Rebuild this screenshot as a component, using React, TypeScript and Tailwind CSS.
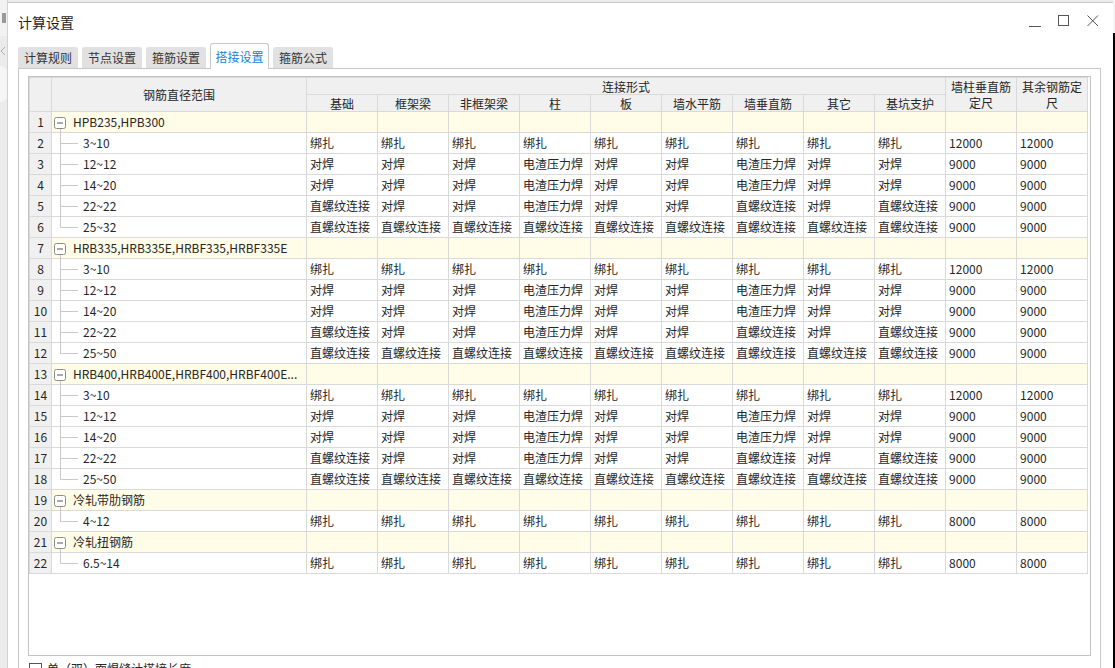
import React from "react";

const subHeaders = ["基础", "框架梁", "非框架梁", "柱", "板", "墙水平筋", "墙垂直筋", "其它", "基坑支护"];

const B = "绑扎";
const D = "对焊";
const E = "电渣压力焊";
const Z = "直螺纹连接";

const pattern = {
  small: [B, B, B, B, B, B, B, B, B, "12000", "12000"],
  mid: [D, D, D, E, D, D, E, D, D, "9000", "9000"],
  big: [Z, D, D, E, D, D, Z, D, Z, "9000", "9000"],
  all: [Z, Z, Z, Z, Z, Z, Z, Z, Z, "9000", "9000"],
  cold: [B, B, B, B, B, B, B, B, B, "8000", "8000"],
};

type Group = { name: string; children: { range: string; cells: string[] }[] };

const groups: Group[] = [
  {
    name: "HPB235,HPB300",
    children: [
      { range: "3~10", cells: pattern.small },
      { range: "12~12", cells: pattern.mid },
      { range: "14~20", cells: pattern.mid },
      { range: "22~22", cells: pattern.big },
      { range: "25~32", cells: pattern.all },
    ],
  },
  {
    name: "HRB335,HRB335E,HRBF335,HRBF335E",
    children: [
      { range: "3~10", cells: pattern.small },
      { range: "12~12", cells: pattern.mid },
      { range: "14~20", cells: pattern.mid },
      { range: "22~22", cells: pattern.big },
      { range: "25~50", cells: pattern.all },
    ],
  },
  {
    name: "HRB400,HRB400E,HRBF400,HRBF400E...",
    children: [
      { range: "3~10", cells: pattern.small },
      { range: "12~12", cells: pattern.mid },
      { range: "14~20", cells: pattern.mid },
      { range: "22~22", cells: pattern.big },
      { range: "25~50", cells: pattern.all },
    ],
  },
  { name: "冷轧带肋钢筋", children: [{ range: "4~12", cells: pattern.cold }] },
  { name: "冷轧扭钢筋", children: [{ range: "6.5~14", cells: pattern.cold }] },
];

const tabs = ["计算规则", "节点设置", "箍筋设置", "搭接设置", "箍筋公式"];

function GroupIcon() {
  return (
    <svg width="20" height="20" className="shrink-0 overflow-visible">
      <rect x="1.5" y="5.5" width="11" height="11" rx="2" fill="#fff" stroke="#8c8c8c" />
      <line x1="4" y1="11" x2="10" y2="11" stroke="#555" />
      <line x1="7.5" y1="17" x2="7.5" y2="21" stroke="#c9c9c9" />
    </svg>
  );
}

function BranchIcon({ last }: { last: boolean }) {
  return (
    <svg width="30" height="20" className="shrink-0 overflow-visible">
      <line x1="7.5" y1="-1" x2="7.5" y2={last ? 10.5 : 21} stroke="#c9c9c9" />
      <line x1="7.5" y1="10.5" x2="25" y2="10.5" stroke="#c9c9c9" />
    </svg>
  );
}

const td = "border border-[#d9d9d9] p-0 pl-[3px] whitespace-nowrap overflow-hidden";
const th = "border border-[#d9d9d9] p-0 font-normal text-center";

export default function App() {
  let n = 0;
  const rows: React.ReactNode[] = [];
  groups.forEach((g, gi) => {
    n += 1;
    rows.push(
      <tr key={"g" + gi} className="h-[21px] bg-[#fffce8]">
        <td className="border border-[#d9d9d9] p-0 bg-[#f0f0f0] text-center">{n}</td>
        <td className="border border-[#d9d9d9] p-0 pl-[1px]">
          <div className="flex items-center">
            <GroupIcon />
            <span className="whitespace-nowrap">{g.name}</span>
          </div>
        </td>
        {Array.from({ length: 11 }).map((_, i) => (
          <td key={i} className={td}></td>
        ))}
      </tr>
    );
    g.children.forEach((c, ci) => {
      n += 1;
      rows.push(
        <tr key={"c" + gi + "-" + ci} className="h-[21px] bg-white">
          <td className="border border-[#d9d9d9] p-0 bg-[#f0f0f0] text-center">{n}</td>
          <td className="border border-[#d9d9d9] p-0 pl-[1px]">
            <div className="flex items-center">
              <BranchIcon last={ci === g.children.length - 1} />
              <span>{c.range}</span>
            </div>
          </td>
          {c.cells.map((v, i) => (
            <td key={i} className={td}>
              {v}
            </td>
          ))}
        </tr>
      );
    });
  });

  return (
    <div className="w-[1115px] h-[668px] flex bg-[#ebebeb] overflow-hidden font-['Noto_Sans_CJK_SC',sans-serif] text-[12px] leading-[16px] text-[#262626]">
      {/* window behind */}
      <div className="w-[8px] shrink-0 flex flex-col overflow-hidden border-r border-[#d2d2d2]">
        <div className="h-[36px] bg-[#f2f2f2] flex items-center">
          <div className="w-[4px] h-[10px] bg-[#9a9a9a] ml-[2px]"></div>
        </div>
        <div className="h-[30px] flex items-center">
          <svg width="6" height="10">
            <path d="M5 1 L1 5 L5 9" fill="none" stroke="#b0b0b0" />
          </svg>
        </div>
        <div className="h-[36px] bg-[#f6f6f6] rounded-r-md"></div>
        <div className="flex-1"></div>
      </div>

      {/* dialog */}
      <div className="mt-[2px] flex-1 bg-white border-t border-[#c8c8c8] flex flex-col">
        <div className="h-[39px] shrink-0 flex items-center pl-[10px] pr-[12px]">
          <span className="text-[14px] leading-[20px] text-[#1f1f1f] -mt-[1px]">计算设置</span>
          <div className="ml-auto flex items-center gap-[17px] text-[#555] mr-[2px] -mt-[4px]">
            <svg width="12" height="12">
              <line x1="0" y1="11.5" x2="12" y2="11.5" stroke="#555" />
            </svg>
            <svg width="12" height="12">
              <rect x="0.5" y="0.5" width="10" height="10" fill="none" stroke="#555" />
            </svg>
            <svg width="12" height="12">
              <path d="M0.5 0.5 L11 11 M11 0.5 L0.5 11" stroke="#555" />
            </svg>
          </div>
        </div>

        {/* tabs */}
        <div className="h-[26px] shrink-0 flex items-end gap-[4px] pl-[10px]">
          {tabs.map((t, i) =>
            i === 3 ? (
              <div
                key={t}
                className="h-[26px] w-[59px] mb-[-1px] bg-white border border-b-0 border-[#c8c8c8] rounded-t-[3px] flex items-center justify-center text-[#1a7fd8] relative z-10"
              >
                {t}
              </div>
            ) : (
              <div
                key={t}
                className="h-[21px] w-[60px] bg-[#e1e1e1] rounded-t-[3px] flex items-center justify-center text-[#333]"
              >
                {t}
              </div>
            )
          )}
        </div>

        {/* tab panel */}
        <div className="flex-1 ml-[10px] mr-[12px] border border-b-0 border-[#c8c8c8] pt-[7px] pl-[9px] pr-[9px] flex flex-col">
          <div className="h-[580px] shrink-0 border border-[#c3c3c3] bg-white overflow-hidden">
            <table className="table-fixed border-collapse w-[1059px]">
              <colgroup>
                <col className="w-[22px]" />
                <col className="w-[255px]" />
                {Array.from({ length: 11 }).map((_, i) => (
                  <col key={i} className="w-[71px]" />
                ))}
              </colgroup>
              <thead className="bg-[#f0f0f0]">
                <tr className="h-[17px]">
                  <th rowSpan={2} className={th}></th>
                  <th rowSpan={2} className={th}>
                    钢筋直径范围
                  </th>
                  <th colSpan={9} className={th + " leading-[15px]"}>
                    连接形式
                  </th>
                  <th rowSpan={2} className={th + " leading-[16px]"}>
                    墙柱垂直筋
                    <br />
                    定尺
                  </th>
                  <th rowSpan={2} className={th + " leading-[16px]"}>
                    其余钢筋定
                    <br />尺
                  </th>
                </tr>
                <tr className="h-[17px]">
                  {subHeaders.map((h) => (
                    <th key={h} className={th + " leading-[15px]"}>
                      {h}
                    </th>
                  ))}
                </tr>
              </thead>
              <tbody>{rows}</tbody>
            </table>
          </div>
          <div className="flex items-start gap-[5px] pt-[7px] pl-[1px]">
            <div className="w-[13px] h-[13px] border border-[#555] bg-white shrink-0"></div>
            <span className="-mt-[2px]">单（双）面焊缝计搭接长度</span>
          </div>
        </div>
      </div>

      {/* right edge */}
      <div className="w-[2px] shrink-0 flex flex-col">
        <div className="h-[33px] bg-[#f4f4f4]"></div>
        <div className="flex-1 bg-black"></div>
      </div>
    </div>
  );
}
